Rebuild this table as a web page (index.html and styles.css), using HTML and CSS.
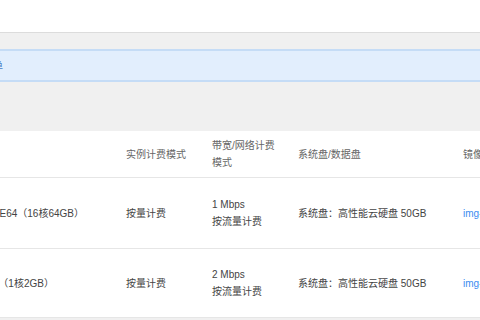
FILE: index.html
```html
<!DOCTYPE html>
<html lang="zh-CN">
<head>
<meta charset="utf-8">
<link rel="stylesheet" href="styles.css">
</head>
<body>
<div class="topbar"></div>
<div class="page">
  <div class="notice"><span class="notice-text">请核对订单</span></div>
  <div class="table">
    <div class="row head">
      <div class="cell">规格</div>
      <div class="cell">实例计费模式</div>
      <div class="cell">带宽/网络计费模式</div>
      <div class="cell">系统盘/数据盘</div>
      <div class="cell">镜像</div>
    </div>
    <div class="row">
      <div class="cell">S5.4XLARGE64（16核64GB）</div>
      <div class="cell">按量计费</div>
      <div class="cell">1 Mbps<br>按流量计费</div>
      <div class="cell">系统盘：高性能云硬盘 50GB</div>
      <div class="cell"><a class="link">img-9qabwvbn</a></div>
    </div>
    <div class="row row2">
      <div class="cell">S5.SMALL2（1核2GB）</div>
      <div class="cell">按量计费</div>
      <div class="cell">2 Mbps<br>按流量计费</div>
      <div class="cell">系统盘：高性能云硬盘 50GB</div>
      <div class="cell"><a class="link">img-9qabwvbn</a></div>
    </div>
  </div>
</div>
</body>
</html>
```
FILE: styles.css
```css
html, body {
  margin: 0;
  padding: 0;
}
body {
  width: 480px;
  height: 320px;
  overflow: hidden;
  background: #f0f0f0;
  font-family: "Liberation Sans", "Noto Sans CJK SC", sans-serif;
  font-size: 10px;
  color: #444;
}
.topbar {
  height: 32px;
  background: #fff;
  border-bottom: 1px solid #dcdcdc;
}
.page {
  margin-left: -55px;
  width: 600px;
  padding-top: 16px;
}
.notice {
  box-sizing: border-box;
  height: 33px;
  background: #e2eefd;
  border-top: 2px solid #c5dcf6;
  border-bottom: 2px solid #c5dcf6;
  display: flex;
  align-items: center;
  padding-left: 8px;
}
.notice-text {
  color: #4a7fc4;
  font-size: 10px;
}
.table {
  margin-top: 49px;
  background: #fff;
}
.row {
  box-sizing: border-box;
  display: grid;
  grid-template-columns: 181px 86px 86px 165px 82px;
  height: 71px;
  border-bottom: 1px solid #e6e6e6;
  align-items: center;
  line-height: 17px;
}
.row.head {
  height: 47px;
  color: #666;
}
.row.row2 {
  height: 69px;
}
.cell {
  padding-right: 16px;
  white-space: normal;
}
.cell:first-child {
  white-space: nowrap;
}
.link {
  color: #3b8cf0;
  white-space: nowrap;
}
```
